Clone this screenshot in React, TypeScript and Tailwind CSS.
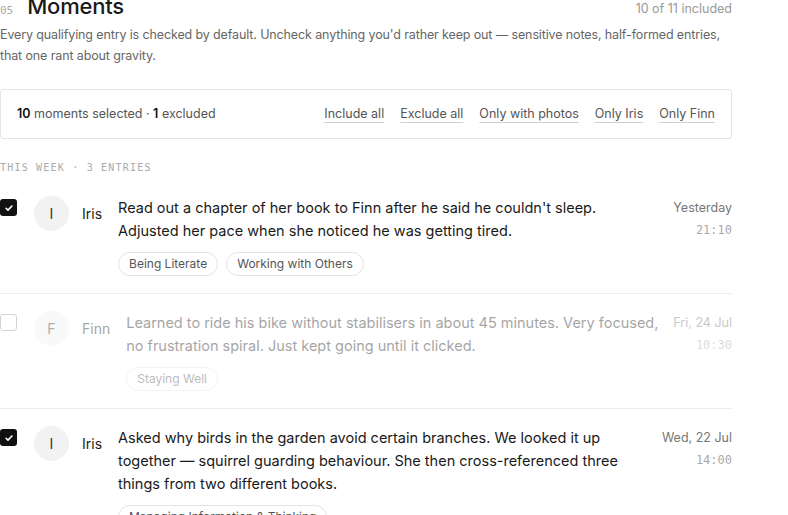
import React from "react";

type Moment = {
  id: string;
  who: "Iris" | "Finn";
  lines: string[];
  tags: string[];
  date: string;
  time: string;
  included: boolean;
};

const moments: Moment[] = [
  {
    id: "m1",
    who: "Iris",
    lines: [
      "Read out a chapter of her book to Finn after he said he couldn't sleep.",
      "Adjusted her pace when she noticed he was getting tired.",
    ],
    tags: ["Being Literate", "Working with Others"],
    date: "Yesterday",
    time: "21:10",
    included: true,
  },
  {
    id: "m2",
    who: "Finn",
    lines: [
      "Learned to ride his bike without stabilisers in about 45 minutes. Very focused,",
      "no frustration spiral. Just kept going until it clicked.",
    ],
    tags: ["Staying Well"],
    date: "Fri, 24 Jul",
    time: "10:30",
    included: false,
  },
  {
    id: "m3",
    who: "Iris",
    lines: [
      "Asked why birds in the garden avoid certain branches. We looked it up",
      "together — squirrel guarding behaviour. She then cross-referenced three",
      "things from two different books.",
    ],
    tags: ["Managing Information & Thinking"],
    date: "Wed, 22 Jul",
    time: "14:00",
    included: true,
  },
];

const filters = ["Include all", "Exclude all", "Only with photos", "Only Iris", "Only Finn"];

const mono = "font-['DejaVu_Sans_Mono',monospace]";

function Check({ on }: { on: boolean }) {
  if (!on) {
    return <span className="mt-[3px] block h-[17px] w-[17px] shrink-0 rounded-[3px] border border-[#d4d4d4] bg-white" />;
  }
  return (
    <span className="mt-[3px] flex h-[17px] w-[17px] shrink-0 items-center justify-center rounded-[3px] bg-[#111]">
      <svg width="10" height="10" viewBox="0 0 12 12" fill="none">
        <path d="M2.5 6.3l2.3 2.3 4.7-5" stroke="#fff" strokeWidth="1.9" strokeLinecap="round" strokeLinejoin="round" />
      </svg>
    </span>
  );
}

function MomentRow({ m, last }: { m: Moment; last: boolean }) {
  return (
    <div className={`flex py-[17px] ${last ? "" : "border-b border-[#ececec]"}`}>
      <Check on={m.included} />
      <div className={`ml-[17px] flex min-w-0 flex-1 gap-[12px] ${m.included ? "" : "opacity-40"}`}>
        <div className="mr-[3px] flex h-[35px] shrink-0 items-center gap-[13px]">
          <span className="flex h-[35px] w-[35px] items-center justify-center rounded-full bg-[#f2f2f2] text-[14px] text-[#333]">
            {m.who[0]}
          </span>
          <span className="mr-px text-[14px] text-[#222]">{m.who}</span>
        </div>
        <div className="min-w-0 flex-1">
          <p className="text-[14.5px] leading-[23px] text-[#1a1a1a]">
            {m.lines.map((l, i) => (
              <React.Fragment key={i}>
                {i > 0 && <br />}
                {l}
              </React.Fragment>
            ))}
          </p>
          <div className="mt-[10px] flex gap-2">
            {m.tags.map((t) => (
              <span
                key={t}
                className="rounded-full border border-[#e2e2e2] px-[10px] text-[12px] leading-[22px] text-[#555]"
              >
                {t}
              </span>
            ))}
          </div>
        </div>
        <div className="shrink-0 pt-[1px] text-right">
          <div className="text-[12.5px] leading-[21px] text-[#777]">{m.date}</div>
          <div className={`${mono} mt-[2px] text-[12px] leading-[20px] text-[#aaa]`}>{m.time}</div>
        </div>
      </div>
    </div>
  );
}

export default function App() {
  return (
    <div className="min-h-screen bg-white font-['Inter',sans-serif] text-[#1a1a1a]">
      <div className="-mt-[9px] w-[732px]">
        <div className="flex items-baseline justify-between">
          <div className="flex items-baseline gap-[14px]">
            <span className={`${mono} text-[11px] text-[#aaa]`}>05</span>
            <h1 className="text-[22px] font-medium leading-[30px] tracking-[-0.01em]">Moments</h1>
          </div>
          <span className="-translate-y-px text-[12.5px] text-[#999]">10 of 11 included</span>
        </div>
        <p className="mt-[3px] text-[12.5px] leading-[21px] tracking-[-0.01em] text-[#666]">
          Every qualifying entry is checked by default. Uncheck anything you'd rather keep out — sensitive notes,
          half-formed entries, that one rant about gravity.
        </p>

        <div className="mt-[23px] flex h-[50px] items-center justify-between rounded-[3px] border border-[#e4e4e4] px-4">
          <span className="text-[12.5px] text-[#555]">
            <b className="font-semibold text-[#111]">10</b> moments selected · <b className="font-semibold text-[#111]">1</b>{" "}
            excluded
          </span>
          <div className="flex gap-4">
            {filters.map((f) => (
              <button
                key={f}
                type="button"
                className="text-[12.5px] text-[#555] underline decoration-[#cfcfcf] underline-offset-[4px]"
              >
                {f}
              </button>
            ))}
          </div>
        </div>

        <div className={`${mono} mt-[21px] text-[10px] tracking-[0.12em] text-[#aaa]`}>
          THIS WEEK · 3 ENTRIES
        </div>

        <div className="mt-[4px]">
          {moments.map((m, i) => (
            <MomentRow key={m.id} m={m} last={i === moments.length - 1} />
          ))}
        </div>
      </div>
    </div>
  );
}
